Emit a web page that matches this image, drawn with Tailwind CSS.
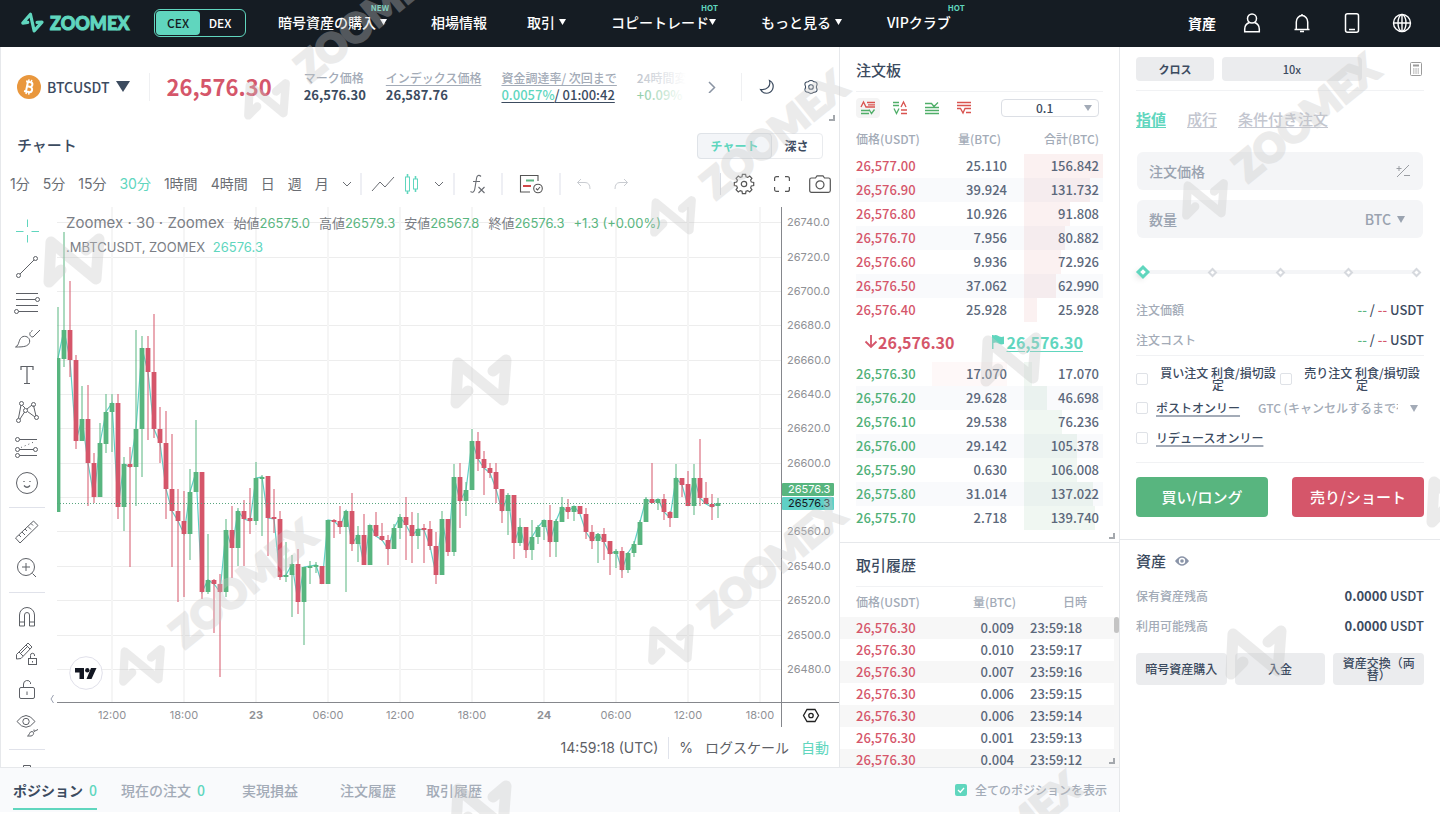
<!DOCTYPE html>
<html lang="ja">
<head>
  <meta charset="UTF-8">
  <title>BTCUSDT | ZOOMEX</title>
  <script src="https://cdn.jsdelivr.net/npm/@tailwindcss/browser@4"></script>
</head>
<body class="relative h-screen overflow-hidden flex flex-col bg-white text-[#3c4b5f] font-['Noto_Sans_CJK_JP',sans-serif] font-medium">

  <!-- shared shapes -->
  <svg class="hidden">
    <symbol id="zmark" viewBox="-36 -36 72 72">
      <path d="M-13 10L-25 22L-23 -18L22 19L25 -21L12 -10" fill="none" stroke="currentColor" stroke-width="11" stroke-linecap="round" stroke-linejoin="round"/>
    </symbol>
    <symbol id="caret" viewBox="0 0 8 8"><path d="M0 1H8L4 8Z" fill="currentColor"/></symbol>
    <symbol id="chev" viewBox="0 0 10 10"><path d="M1 3L5 7L9 3" fill="none" stroke="currentColor"/></symbol>
  </svg>

  <header class="h-[47px] shrink-0 bg-[#151c23] text-white flex items-center pl-[22px] pr-[28px] pb-0.5 text-sm">
    <a href="#" class="flex items-center text-[#60d6be]">
      <svg class="w-[21px] h-[21px] rotate-38"><use href="#zmark"/></svg>
      <span class="ml-[7px] w-[82px] font-['Lato'] font-black text-lg leading-6 [-webkit-text-stroke:1px_#60d6be]">ZOOMEX</span>
    </a>
    <div class="ml-[22px] flex items-center w-[92px] h-7 p-px border border-[#60d6be] rounded-md text-xs">
      <button class="w-11 h-6 rounded bg-[#60d6be] text-[#151c23]">CEX</button>
      <button class="w-10 h-6">DEX</button>
    </div>
    <nav class="ml-8 pb-0.5 flex items-center gap-[44px] flex-1 whitespace-nowrap">
      <a href="#" class="relative flex items-center gap-1">暗号資産の購入<svg class="w-[7px] h-[7px]"><use href="#caret"/></svg><span class="absolute -top-2.5 -right-0.5 text-[8px] leading-3 font-bold text-[#60d6be]">NEW</span></a>
      <a href="#">相場情報</a>
      <a href="#" class="-ml-1 flex items-center gap-1">取引<svg class="w-[7px] h-[7px]"><use href="#caret"/></svg></a>
      <a href="#" class="relative flex items-center ml-px">コピートレード<svg class="w-[7px] h-[7px]"><use href="#caret"/></svg><span class="absolute -top-2.5 -right-0.5 text-[8px] leading-3 font-bold text-[#60d6be]">HOT</span></a>
      <a href="#" class="ml-px flex items-center gap-1">もっと見る<svg class="w-[7px] h-[7px]"><use href="#caret"/></svg></a>
      <a href="#" class="relative ml-px">VIPクラブ<span class="absolute -top-2.5 -right-3.5 text-[8px] leading-3 font-bold text-[#60d6be]">HOT</span></a>
    </nav>
    <div class="flex items-center gap-[30px]">
      <a href="#" class="font-bold -mr-1">資産</a>
      <button aria-label="アカウント"><svg class="w-5 h-5" viewBox="0 0 20 20" fill="none" stroke="currentColor" stroke-width="1.5"><circle cx="10" cy="5.5" r="4.5"/><path d="M7.500 9.500C5 10.300 2.700 12.500 2.700 16V18.700H17.300V16C17.300 12.500 15 10.300 12.500 9.500"/></svg></button>
      <button aria-label="通知"><svg class="w-5 h-5" viewBox="0 0 20 20" fill="none" stroke="currentColor" stroke-width="1.5"><path d="M2.500 16.500H17.500M4.300 16.500V9A5.700 6.500 0 0 1 15.700 9V16.500M10 2.500V1M8 18.500H12"/></svg></button>
      <button aria-label="アプリ"><svg class="w-5 h-5" viewBox="0 0 20 20" fill="none" stroke="currentColor" stroke-width="1.5"><rect x="3.500" y=".8" width="13" height="18.400" rx="2"/><path d="M7 16.500H13"/></svg></button>
      <button aria-label="言語"><svg class="w-5 h-5" viewBox="0 0 20 20" fill="none" stroke="currentColor" stroke-width="1.4"><circle cx="10" cy="10" r="8.500"/><ellipse cx="10" cy="10" rx="4" ry="8.500"/><path d="M1.500 10H18.500M10 1.500V18.500"/></svg></button>
    </div>
  </header>

  <main class="flex-1 min-h-0 flex">
    <div class="flex-1 min-w-0 flex flex-col">
      <div class="flex-1 min-h-0 flex">

        <!-- chart column -->
        <section class="flex-1 min-w-0 flex flex-col border-x border-[#e6e8eb]">
          <div class="relative h-[79px] shrink-0 flex items-center pl-4">
            <svg class="w-6 h-6" viewBox="0 0 24 24"><circle cx="12" cy="12" r="12" fill="#e9973d"/><g transform="rotate(12 12 12)" fill="none" stroke="#fff" stroke-width="2"><path d="M8 7H12.500A2.300 2.300 0 0 1 12.500 11.700H10M12.500 11.700H13A2.600 2.600 0 0 1 13 17H8M9.900 7V17"/><path d="M10.500 4.500V7M13.200 4.500V7M10.500 17V19.500M13.200 17V19.500" stroke-width="1.5"/></g></svg>
            <span class="ml-1.5 text-sm">BTCUSDT</span>
            <svg class="ml-[7px] w-[14px] h-[11px]" viewBox="0 0 14 11"><path d="M0 0H14L7 11Z" fill="#3c4b5f"/></svg>
            <span class="ml-[19px] w-px h-7 bg-[#eff0f2]"></span>
            <span class="ml-4 text-[22px] font-bold text-[#d5566a]">26,576.30</span>
            <div class="relative ml-8 flex gap-5 flex-1 overflow-hidden whitespace-nowrap max-w-[382px]">
              <div><p class="text-xs leading-4 text-[#a3abb7]">マーク価格</p><p class="text-[13px] font-bold leading-[18px]">26,576.30</p></div>
              <div><p class="text-xs leading-4 text-[#a3abb7] underline underline-offset-2">インデックス価格</p><p class="text-[13px] font-bold leading-[18px]">26,587.76</p></div>
              <div><p class="text-xs leading-4 text-[#a3abb7] underline underline-offset-2">資金調達率/ 次回まで</p><p class="text-[13px] leading-[18px] underline underline-offset-2"><span class="text-[#60d6be]">0.0057%</span>/ 01:00:42</p></div>
              <div><p class="text-xs leading-4 text-[#a3abb7]">24時間変動</p><p class="text-[13px] leading-[18px] text-[#5ab580]">+0.09%</p></div>
              <span class="absolute right-0 inset-y-0 w-[56px] bg-linear-to-r from-white/20 to-white"></span>
            </div>
            <button class="ml-5" aria-label="次へ"><svg class="w-3 h-3" viewBox="0 0 12 12" fill="none" stroke="#8a94a3" stroke-width="1.5"><path d="M3 1L8.500 6.500L3 12"/></svg></button>
            <span class="ml-auto w-px h-7 bg-[#eff0f2]"></span>
            <button class="ml-[17px]" aria-label="テーマ"><svg class="w-4 h-4" viewBox="0 0 16 16" fill="none" stroke="#3c4b5f" stroke-width="1.200"><path d="M10.500 1.500C12 7 8 11.500 1.500 10.500C4 15.500 11 15.500 13.500 10.500C15 7 14 3 10.500 1.500Z"/></svg></button>
            <button class="ml-7 mr-5" aria-label="設定"><svg class="w-4 h-4" viewBox="0 0 16 16" fill="none" stroke="#3c4b5f" stroke-width="1.100"><path d="M5 2.800Q8 .2 11 2.800Q14.500 3 14 6Q12.800 8 14 10Q14.500 13 11 13.200Q8 15.800 5 13.200Q1.500 13 2 10Q3.200 8 2 6Q1.500 3 5 2.800Z"/><circle cx="8" cy="8" r="2.300"/></svg></button>
            <span class="absolute right-1 bottom-[5px] w-1.5 h-1.5 border-r-2 border-b-2 border-[#a4a8ad]"></span>
          </div>

          <div class="h-[39px] shrink-0 flex items-center justify-between pl-4 pr-[16px]">
            <h2 class="text-[15px]">チャート</h2>
            <div class="flex h-[26px] w-[126px] text-xs border border-[#e9ebee] rounded">
              <button class="w-[75px] -m-px border border-[#dfe3e8] rounded bg-[#f3f5f8] text-[#60d6be] font-bold">チャート</button>
              <button class="flex-1 font-bold">深さ</button>
            </div>
          </div>

          <!-- toolbar -->
          <div class="h-[42px] pb-[5px] shrink-0 flex items-center pl-[9px] pr-2 font-['Inter','Noto_Sans_CJK_JP',sans-serif] font-normal text-sm text-[#6a6d73] whitespace-nowrap">
            <div class="flex gap-[13px] items-center w-[342px]">
              <button>1分</button><button>5分</button><button>15分</button><button class="text-[#60d6be]">30分</button><button>1時間</button><button>4時間</button><button>日</button><button>週</button><button>月</button>
              <button aria-label="間隔"><svg class="w-[10px] h-[10px]"><use href="#chev"/></svg></button>
            </div>
            <span class="ml-2 w-0.5 h-[22px] bg-[#eeeff4]"></span>
            <button class="ml-[9px]" aria-label="ライン"><svg class="w-6 h-5" viewBox="0 0 24 20" fill="none" stroke="currentColor"><path d="M1 17L9 8L14 13L23 3"/></svg></button>
            <button class="ml-2" aria-label="ローソク足"><svg class="w-[18px] h-[22px]" viewBox="0 0 18 22" fill="none" stroke="#60d6be"><path d="M4.500 1V4M4.500 18V21M12.500 3V6M12.500 16V19" stroke-width="1.600"/><rect x="2.500" y="4" width="4" height="14"/><rect x="10.500" y="6" width="4" height="10"/></svg></button>
            <button class="ml-[13px]" aria-label="種類"><svg class="w-[10px] h-[10px]"><use href="#chev"/></svg></button>
            <span class="ml-[9px] w-0.5 h-[22px] bg-[#eeeff4]"></span>
            <button class="ml-[14px]" aria-label="インジケーター"><svg class="w-[18px] h-[20px]" viewBox="0 0 18 20" fill="none" stroke="currentColor" stroke-width="1.100"><path d="M12 2.500C10 .500 8 1.500 7.600 4L5.800 15C5.400 18 3.500 19 1.500 17.500M4 7.500H11M9.500 13L15.500 19M15.500 13L9.500 19"/></svg></button>
            <span class="ml-[14px] w-0.5 h-[22px] bg-[#eeeff4]"></span>
            <button class="ml-4" aria-label="テンプレート"><svg class="w-6 h-5" viewBox="0 0 24 20" fill="none" stroke="#555" stroke-width="1.100"><path d="M19 7V1.500H1.500V18H11"/><path d="M7 6.500H15" stroke="#5ab580" stroke-width="2"/><path d="M4 12H12" stroke="#cf4747" stroke-width="2"/><circle cx="19" cy="14.500" r="4.300"/><path d="M17 14.500L18.500 16L21 13"/></svg></button>
            <span class="ml-4 w-0.5 h-[22px] bg-[#eeeff4]"></span>
            <button class="ml-[15px]" aria-label="元に戻す"><svg class="w-4 h-3" viewBox="0 0 16 12" fill="none" stroke="#c9ccd1"><path d="M5 1L1.500 4.500L5 8M1.500 4.500H9Q14 4.500 14 11"/></svg></button>
            <button class="ml-[21px]" aria-label="やり直し"><svg class="w-4 h-3" viewBox="0 0 16 12" fill="none" stroke="#c9ccd1"><path d="M11 1L14.500 4.500L11 8M14.500 4.500H7Q2 4.500 2 11"/></svg></button>
            <span class="ml-auto w-px h-[22px] bg-[#dddfe4]"></span>
            <button class="ml-3" aria-label="チャート設定"><svg class="w-[22px] h-[22px]" viewBox="0 0 22 22" fill="none" stroke="#555" stroke-width="1.200"><path id="gear" d=""/><circle cx="11" cy="11" r="2.700"/></svg></button>
            <button class="ml-[19px]" aria-label="全画面"><svg class="w-[16px] h-[16px]" viewBox="0 0 16 16" fill="none" stroke="#555" stroke-width="1.200"><path d="M.6 5V2.600Q.6 .6 2.600 .6H5M11 .6H13.400Q15.400 .6 15.400 2.600V5M15.400 11V13.400Q15.400 15.400 13.400 15.400H11M5 15.400H2.600Q.6 15.400 .6 13.400V11"/></svg></button>
            <button class="ml-[19px]" aria-label="スクリーンショット"><svg class="w-[22px] h-[18px]" viewBox="0 0 22 18" fill="none" stroke="#555" stroke-width="1.200"><path d="M2.500 3H6.500L8 .8H14L15.500 3H19.500Q21.300 3 21.300 4.800V15.500Q21.300 17.300 19.500 17.300H2.500Q.7 17.300 .7 15.500V4.800Q.7 3 2.500 3Z"/><circle cx="11" cy="9.800" r="4"/></svg></button>
          </div>

          <div class="flex-1 min-h-0 flex">
            <!-- drawing tools -->
            <div class="relative w-14 shrink-0 pt-[6px] overflow-hidden text-[#5d6066] [&>button]:flex [&>button]:h-9 [&>button]:w-full [&>button]:pr-1 [&>button]:items-center [&>button]:justify-center [&_svg]:w-7 [&_svg]:h-7 [&_svg]:fill-none [&_svg]:stroke-current">
              <button aria-label="十字線"><svg viewBox="0 0 28 28"><path stroke="#60d6be" d="M14.500 2.500V10M14.500 18V25.500M3 14.500H10.500M18.500 14.500H26"/></svg></button>
              <button aria-label="トレンドライン"><svg viewBox="0 0 28 28"><path d="M7 21L21 7"/><circle cx="5.500" cy="22.500" r="2"/><circle cx="22.500" cy="5.500" r="2"/></svg></button>
              <button aria-label="フィボナッチ"><svg viewBox="0 0 28 28"><path d="M3 4.500H25M3 10.500H22.500M3 16.500H25M5.500 22.500H25"/><circle cx="24.500" cy="10.500" r="2"/><circle cx="3.500" cy="22.500" r="2"/></svg></button>
              <button aria-label="ブラシ"><svg viewBox="0 0 28 28"><path d="M2.500 22C7 20 5 13.500 10 11.500C14 10.500 17.500 13.500 16.500 17.500C15 21.500 11 22 2.500 22ZM17.500 7C16 9 17 12 20 12L27 5M18 6.500L19.500 5.500"/></svg></button>
              <button aria-label="テキスト"><svg viewBox="0 0 28 28"><path stroke-width="1.200" d="M8 9V5.500H20V9M14 5.500V22.500M11 22.500H17"/></svg></button>
              <button aria-label="パターン"><svg viewBox="0 0 28 28"><path d="M5.500 21L8 8M9.500 8.500L12 11M14 12L19 8M20.500 8.500L23 19M14.500 14.500L22 20M7 22L11.500 15"/><circle cx="8.500" cy="6.500" r="2"/><circle cx="20.500" cy="7.500" r="2"/><circle cx="12.500" cy="13.500" r="2"/><circle cx="5.500" cy="23.500" r="2"/><circle cx="23.500" cy="20.500" r="2"/></svg></button>
              <button aria-label="予測"><svg viewBox="0 0 28 28"><path d="M6.500 6.500H24M6.500 16.500H20.500M6.500 22.500H24"/><path stroke-dasharray="1 3" d="M8 14.500L22 8.500"/><circle cx="4.500" cy="6.500" r="2"/><circle cx="4.500" cy="16.500" r="2"/><circle cx="22.500" cy="16.500" r="2"/><circle cx="4.500" cy="22.500" r="2"/></svg></button>
              <button aria-label="アイコン"><svg viewBox="0 0 28 28"><circle cx="14" cy="14" r="10.500"/><path d="M11 16.500Q14 20 17 16.500M11 12V13M17 12V13" stroke-width="1.300"/></svg></button>
              <hr class="my-[6px] ml-2 mr-3 border-[#e0e2ea]">
              <button aria-label="計測"><svg viewBox="0 0 28 28"><path d="M2.500 20L20.500 3L25 7.500L7 25ZM6 17L8 19M9 14L12 17M12 11L14 13M15 8.500L18 11.500M18 5.500L20 7.500"/></svg></button>
              <button aria-label="ズーム"><svg viewBox="0 0 28 28"><circle cx="13" cy="13" r="8.500"/><path d="M19.500 19.500L23 23M13 9V17M9 13H17"/></svg></button>
              <hr class="my-[6px] ml-2 mr-3 border-[#e0e2ea]">
              <button aria-label="マグネット"><svg viewBox="0 0 28 28"><path d="M6.500 23V12A7.500 7.500 0 0 1 21.500 12V23H16.500V12A2.500 2.500 0 0 0 11.500 12V23ZM6.500 19H11.500M16.500 19H21.500"/></svg></button>
              <button aria-label="描画モード"><svg viewBox="0 0 28 28"><path d="M3.500 20V15.500L15 4L19 8L8 19.500L3.500 20M6 13L10 17M13 6L17 10M8 14L14.500 7.500"/><rect x="15.500" y="19.500" width="8" height="6"/><path d="M17.500 19.500V16.500A2 2 0 0 1 21.500 16V17M19.500 22V23.500"/></svg></button>
              <button aria-label="ロック"><svg viewBox="0 0 28 28"><rect x="6.500" y="12.500" width="15" height="11" rx="1.500"/><path d="M10.500 12.500V9A3.700 3.700 0 0 1 17.500 7.500V9M14 16.500V20"/></svg></button>
              <button aria-label="非表示"><svg viewBox="0 0 28 28"><path d="M4 10.500Q13 -1.500 22 10.500Q13 22 4 10.500Z"/><circle cx="13" cy="10.500" r="3.200"/><path d="M14.500 25C17 24 16 20.500 19 20.500C21.500 21 21 24.500 18 25ZM21 18.500V20.500L25 18.500"/></svg></button>
              <hr class="my-[6px] ml-2 mr-3 border-[#e0e2ea]">
              <button aria-label="削除"><svg viewBox="0 0 28 28"><path d="M10.500 8V5.500H17.500V8M5 8.500H23M7 8.500V24H21V8.500"/></svg></button>
              <svg class="absolute right-0.5 bottom-[63px] !w-1.5 !h-2.5" viewBox="0 0 6 10"><path d="M4.500 1L2 5L4.500 9" stroke="#9aa0b0"/></svg>
            </div>

            <div class="flex-1 min-w-0 flex flex-col font-['Inter','Noto_Sans_CJK_JP',sans-serif] font-normal">
              <div class="relative h-[520px] shrink-0 flex">
                <svg id="plot" class="flex-1 min-w-0 h-full"></svg>
                <svg id="axis" class="w-[58px] shrink-0 h-full"></svg>
                <div class="absolute left-[9px] top-[7px] text-[#7b7e85] whitespace-nowrap">
                  <p class="flex items-center gap-[9px] text-[13px] leading-[18px] text-[#5ab580]">
                    <span class="text-[15px] leading-[18px] text-[#7b7e85]">Zoomex · 30 · Zoomex</span>
                    <span><span class="text-[#7b7e85]">始値</span>26575.0</span>
                    <span><span class="text-[#7b7e85]">高値</span>26579.3</span>
                    <span><span class="text-[#7b7e85]">安値</span>26567.8</span>
                    <span><span class="text-[#7b7e85]">終値</span>26576.3</span>
                    <span>+1.3 (+0.00%)</span>
                  </p>
                  <p class="mt-[7px] text-[13px] leading-4">.MBTCUSDT, ZOOMEX <span class="ml-1 text-[#60d6be]">26576.3</span></p>
                </div>
                <svg class="absolute left-3 top-[449px] w-[34px] h-[34px]" viewBox="0 0 34 34"><circle cx="17" cy="17" r="16.300" fill="#fff" stroke="#e0e0ea"/><path fill="#131722" d="M6 12H15V23H10.500V16.500H6ZM22 12H27.500L22.500 23H17.500Z"/><circle cx="18.300" cy="14.200" r="2.200" fill="#131722"/></svg>
              </div>
              <div class="flex-1 flex items-center justify-end pt-0.5 pr-[10px] text-sm text-[#5d6066]">
                <span>14:59:18 (UTC)</span>
                <span class="mx-[10px] w-px h-[22px] bg-[#e0e3eb]"></span>
                <button>%</button>
                <button class="ml-3">ログスケール</button>
                <button class="ml-3 text-[#60d6be]">自動</button>
              </div>
            </div>
          </div>
        </section>

        <!-- order book + trades -->
        <section class="w-[280px] shrink-0 flex flex-col border-r border-[#e6e8eb] text-[#5c687b]">
          <div class="relative h-[496px] shrink-0 pl-4 pr-4 border-b border-[#e6e8eb]">
            <h2 class="h-[45px] pt-0.5 flex items-center text-[15px] text-[#3c4b5f] border-b border-[#f1f2f4]">注文板</h2>
            <div class="h-8 flex items-center">
              <div class="flex gap-2 [&_svg]:w-4 [&_svg]:h-4 [&_svg]:fill-none [&_path]:stroke-[1.3px]">
                <button class="w-6 h-5 rounded bg-[#f4f4f4] flex items-center justify-center" aria-label="両方"><svg viewBox="0 0 16 16"><path stroke="#d9534f" d="M1 7L3.500 2L6 7H15M7 2.500H15M8 4.800H15"/><path stroke="#4fae68" d="M1 10.500H9M1 13.500H9M9 9.500L11.500 13.500L14.500 9.500"/></svg></button>
                <button class="w-6 h-5 flex items-center justify-center" aria-label="左右"><svg viewBox="0 0 16 16"><path stroke="#4fae68" d="M1 2.500H7M1 5.500H7M2 8.500L4.500 13.500L7 8.500"/><path stroke="#d9534f" d="M9 7L11.500 2L14 7M9 10H15M9 13.500H15"/></svg></button>
                <button class="w-6 h-5 flex items-center justify-center" aria-label="買い"><svg viewBox="0 0 16 16"><path stroke="#4fae68" d="M1 3.500H7.500L10 6.500L14 2.500M1 7.500H15M1 10.500H15M1 13.500H15"/></svg></button>
                <button class="w-6 h-5 flex items-center justify-center" aria-label="売り"><svg viewBox="0 0 16 16"><path stroke="#d9534f" d="M1 2.500H15M1 5.500H15M1 8.500H4.500L7 13L9 8.500H15M10 12.500H15"/></svg></button>
              </div>
              <div class="relative ml-auto mr-1">
                <select aria-label="表示単位" class="appearance-none block w-[98px] h-[18px] pl-[34px] text-xs leading-4 text-[#3c4b5f] border border-[#dcdfe5] rounded bg-white"><option>0.1</option></select>
                <svg class="absolute right-[7px] top-1.5 w-2 h-1.5 text-[#a3abb7]" viewBox="0 0 8 6"><path d="M0 0H8L4 6Z" fill="currentColor"/></svg>
              </div>
            </div>
            <table class="w-full table-fixed text-right text-[13px]">
              <colgroup><col><col class="w-[92px]"><col class="w-[79px]"></colgroup>
              <thead class="text-xs text-[#a3abb7]"><tr class="h-[30px]"><th class="p-0 font-medium text-left whitespace-nowrap">価格(USDT)</th><th class="p-0 pr-[23px] font-medium">量(BTC)</th><th class="p-0 pr-1 font-medium">合計(BTC)</th></tr></thead>
              <tbody id="asks"></tbody>
            </table>
            <div class="h-10 flex items-center text-base font-bold pl-2">
              <svg class="w-3.5 h-4" viewBox="0 0 14 16" fill="none" stroke="#d5566a" stroke-width="1.800"><path d="M7 1V13M1.500 7.500L7 13L12.500 7.500"/></svg>
              <span class="text-[#d5566a]">26,576.30</span>
              <svg class="ml-[37px] w-3.5 h-4" viewBox="0 0 14 16" fill="#60d6be"><path d="M1 1H2.500V15H1ZM2.500 1.500Q5 .5 7.500 2Q10 3.500 13 2.500V10Q10 11 7.500 9.500Q5 8 2.500 9Z"/></svg>
              <a href="#" class="ml-px text-[#60d6be] underline underline-offset-2">26,576.30</a>
            </div>
            <table class="w-full table-fixed text-right text-[13px]">
              <colgroup><col><col class="w-[92px]"><col class="w-[79px]"></colgroup>
              <tbody id="bids"></tbody>
            </table>
            <span class="absolute right-1 bottom-[3px] w-1.5 h-1.5 border-r-2 border-b-2 border-[#a4a8ad]"></span>
          </div>

          <div class="relative flex-1 min-h-0 flex flex-col">
            <h2 class="mx-4 h-11 pt-0.5 shrink-0 flex items-center text-[15px] text-[#3c4b5f] border-b border-[#f1f2f4]">取引履歴</h2>
            <div class="h-[30px] shrink-0 flex items-center pl-4 text-xs text-[#a3abb7]"><span class="w-[76px]">価格(USDT)</span><span class="w-[84px] text-right">量(BTC)</span><span class="w-[71px] text-right">日時</span></div>
            <div class="flex-1 min-h-0 overflow-hidden flex">
              <table class="flex-1 h-fit text-[13px] border-collapse"><tbody id="trades"></tbody></table>
              <div class="w-[5px] bg-[#f7f7f7]"><div class="h-4 rounded-full bg-[#c4c4c4]"></div></div>
            </div>
            <span class="absolute right-1 bottom-[3px] w-1.5 h-1.5 border-r-2 border-b-2 border-[#a4a8ad]"></span>
          </div>
        </section>
      </div>

      <!-- positions bar -->
      <div class="h-[45px] mb-0.5 shrink-0 flex items-center pl-[13px] pr-3 border-t border-r border-[#e6e8eb] bg-[#f9fafc] text-sm text-[#a3abb7]">
        <button class="h-10 pt-0.5 border-b-2 border-[#60d6be] text-[#3c4b5f] font-bold">ポジション<span class="ml-1.5 font-medium text-[#60d6be]">0</span></button>
        <button class="ml-6">現在の注文<span class="ml-1.5 text-[#60d6be]">0</span></button>
        <button class="ml-[37px]">実現損益</button>
        <button class="ml-[42px]">注文履歴</button>
        <button class="ml-[30px]">取引履歴</button>
        <label class="ml-auto flex items-center gap-2 text-xs">
          <span class="relative w-3 h-3">
            <input type="checkbox" checked class="appearance-none block w-3 h-3 rounded-xs bg-[#60d6be]">
            <svg class="absolute inset-0 w-3 h-3" viewBox="0 0 12 12" fill="none" stroke="#fff" stroke-width="1.300"><path d="M3 6L5.300 8.200L9 4"/></svg>
          </span>全てのポジションを表示</label>
      </div>
    </div>

    <!-- order form -->
    <aside class="w-[320px] shrink-0 text-xs">
      <div class="h-[493px] px-4 pt-[10px] border-b border-[#e6e8eb]">
        <div class="flex items-center gap-2 pb-[9px] border-b border-[#f1f2f4] text-[11px]">
          <button class="w-[78px] h-6 rounded bg-[#ebecee] font-bold">クロス</button>
          <button class="w-[140px] h-6 rounded bg-[#ebecee]">10x</button>
          <button class="ml-auto mr-0.5" aria-label="計算機"><svg class="w-3 h-[14px]" viewBox="0 0 12 14" fill="none" stroke="#9b9b9b"><rect x=".5" y=".5" width="11" height="13" rx="1"/><path d="M3 3.500H9" stroke-width="2"/><path d="M3 7H9M3 9H9M3 11H9" stroke-dasharray="1.500 .8"/></svg></button>
        </div>
        <div class="mt-4 h-6 flex items-center gap-[21px] text-[15px] leading-6 text-[#c3c6cf]">
          <button class="text-[#60d6be] underline underline-offset-2 font-bold">指値</button><button class="underline underline-offset-2">成行</button><button class="underline underline-offset-2">条件付き注文</button>
        </div>
        <div class="relative mt-[21px] mx-px">
          <input type="text" aria-label="注文価格" placeholder="注文価格" class="block w-full h-[38px] px-3 rounded-md bg-[#f4f5f7] text-sm placeholder:text-[#9aa3b0]">
          <svg class="absolute right-3 top-3 w-4 h-4" viewBox="0 0 16 16" fill="none" stroke="#9a9da3"><path d="M2 13L14 1M1.500 4.500H6.500M4 2V7M9 11.500H15"/></svg>
        </div>
        <div class="mt-2.5 mx-px flex h-[38px] rounded-md bg-[#f4f5f7] text-sm text-[#9aa3b0]">
          <input type="text" aria-label="数量" placeholder="数量" class="flex-1 min-w-0 px-3 placeholder:text-[#9aa3b0]">
          <button class="flex items-center gap-1.5 pr-[18px]">BTC<svg class="w-2 h-2"><use href="#caret"/></svg></button>
        </div>
        <div class="relative mt-[27px] h-3.5 flex items-center justify-between">
          <div class="absolute inset-x-2 h-1 bg-[#f4f5f7]"></div>
          <i class="relative w-2.5 h-2.5 ml-0.5 rotate-45 bg-white border-3 border-[#60d6be] shadow-md"></i>
          <i class="relative w-[7px] h-[7px] rotate-45 bg-white border-2 border-[#d6d9de]"></i>
          <i class="relative w-[7px] h-[7px] rotate-45 bg-white border-2 border-[#d6d9de]"></i>
          <i class="relative w-[7px] h-[7px] rotate-45 bg-white border-2 border-[#d6d9de]"></i>
          <i class="relative w-[7px] h-[7px] mr-1 rotate-45 bg-white border-2 border-[#d6d9de]"></i>
          <input type="range" aria-label="数量の割合" value="0" class="absolute inset-0 w-full opacity-0">
        </div>
        <div class="mt-4 h-[30px] flex items-center justify-between"><span class="text-[#a3abb7]">注文価額</span><span class="text-[13px]"><span class="text-[#5ab580]">--</span> / <span class="text-[#d5566a]">--</span> USDT</span></div>
        <div class="h-[31px] flex items-center justify-between border-b border-[#f1f2f4]"><span class="text-[#a3abb7]">注文コスト</span><span class="text-[13px]"><span class="text-[#5ab580]">--</span> / <span class="text-[#d5566a]">--</span> USDT</span></div>
        <div class="mt-[11px] h-6 flex items-center leading-3 text-center">
          <input id="tp-buy" type="checkbox" class="appearance-none w-3 h-3 shrink-0 rounded-xs border border-[#dfe2e7]"><label for="tp-buy" class="w-[132px] pl-2">買い注文 利食/損切設定</label>
          <input id="tp-sell" type="checkbox" class="appearance-none w-3 h-3 shrink-0 rounded-xs border border-[#dfe2e7]"><label for="tp-sell" class="w-[132px] pl-2">売り注文 利食/損切設定</label>
        </div>
        <div class="mt-0.5 h-[30px] flex items-center">
          <input id="post" type="checkbox" class="appearance-none w-3 h-3 shrink-0 rounded-xs border border-[#dfe2e7]"><label for="post" class="ml-2 underline underline-offset-2 decoration-2 decoration-[#a3abb7]">ポストオンリー</label>
          <select aria-label="有効期間" class="appearance-none ml-[18px] w-[140px] text-[#a3abb7]"><option>GTC (キャンセルするまで有効)</option></select>
          <svg class="ml-3 w-2 h-2 text-[#a3abb7]"><use href="#caret"/></svg>
        </div>
        <div class="h-[30px] flex items-center">
          <input id="reduce" type="checkbox" class="appearance-none w-3 h-3 shrink-0 rounded-xs border border-[#dfe2e7]"><label for="reduce" class="ml-2 underline underline-offset-2 decoration-2 decoration-[#a3abb7]">リデュースオンリー</label>
        </div>
        <div class="mt-[9px] pt-[14px] border-t border-[#f1f2f4] flex gap-6 text-[15px] text-white">
          <button class="flex-1 h-10 rounded bg-[#58b57f]">買い/ロング</button>
          <button class="flex-1 h-10 rounded bg-[#d5566a]">売り/ショート</button>
        </div>
      </div>

      <div class="px-4 pt-2">
        <h2 class="h-[26px] flex items-center gap-2 text-[15px]">資産<svg class="w-4 h-4" viewBox="0 0 16 16"><path d="M1 8Q8 -1.500 15 8Q8 17.500 1 8Z" fill="#8a94a8"/><circle cx="8" cy="8" r="3.200" fill="#fff"/><circle cx="8" cy="8" r="1.800" fill="#8a94a8"/></svg></h2>
        <div class="mt-[7px] h-[30px] flex items-center justify-between"><span class="text-[#a3abb7]">保有資産残高</span><span class="text-[13px]"><b>0.0000</b> USDT</span></div>
        <div class="h-[30px] flex items-center justify-between"><span class="text-[#a3abb7]">利用可能残高</span><span class="text-[13px]"><b>0.0000</b> USDT</span></div>
        <div class="mt-3 grid grid-cols-3 gap-2 leading-3">
          <button class="h-8 rounded bg-[#ebecee]">暗号資産購入</button>
          <button class="h-8 rounded bg-[#ebecee]">入金</button>
          <button class="h-8 px-2 rounded bg-[#ebecee]">資産交換（両替）</button>
        </div>
      </div>
    </aside>
  </main>

  <!-- tiled watermark -->
  <svg id="watermark" class="absolute inset-0 w-full h-full pointer-events-none text-[#c8c8c8] opacity-35 font-['Lato'] font-black text-[39px]" fill="currentColor"></svg>

  <script>
    // order book: price, size, total, depth bar width
    const asks = [
      ['26,577.00', '25.110', '156.842', 79], ['26,576.90', '39.924', '131.732', 66], ['26,576.80', '10.926', '91.808', 46],
      ['26,576.70', '7.956', '80.882', 41], ['26,576.60', '9.936', '72.926', 37], ['26,576.50', '37.062', '62.990', 32], ['26,576.40', '25.928', '25.928', 13]
    ];
    const bids = [
      ['26,576.30', '17.070', '17.070', 8], ['26,576.20', '29.628', '46.698', 23], ['26,576.10', '29.538', '76.236', 38],
      ['26,576.00', '29.142', '105.378', 53], ['26,575.90', '0.630', '106.008', 53], ['26,575.80', '31.014', '137.022', 69], ['26,575.70', '2.718', '139.740', 71]
    ];
    const trades = [['0.009', '18'], ['0.010', '17'], ['0.007', '16'], ['0.006', '15'], ['0.006', '14'], ['0.001', '13'], ['0.004', '12']];

    function bookRow(r, priceCls, barCls, sizeCls) {
      return `<tr class="h-6 leading-6 even:bg-[#f9fafc]">
        <td class="p-0 text-left ${priceCls}">${r[0]}</td>
        <td class="p-0 pr-[17px]"><div class="${sizeCls}">${r[1]}</div></td>
        <td class="relative p-0 pr-1"><span class="absolute left-0 inset-y-0 ${barCls}" style="width:${r[3]}px"></span><span class="relative">${r[2]}</span></td></tr>`;
    }
    document.getElementById('asks').innerHTML = asks.map(r => bookRow(r, 'text-[#d5566a]', 'bg-[#d04a48]/8', '')).join('');
    document.getElementById('bids').innerHTML = bids.map((r, i) => bookRow(r, 'text-[#4fb077]', 'bg-[#5aa56e]/9', i === 0 ? 'bg-[#fef8f8]' : '')).join('');
    document.getElementById('trades').innerHTML = trades.map(t => `<tr class="h-[22px] leading-[22px] odd:bg-[#f7f7f7]">
      <td class="p-0 pl-4 w-[92px] text-[#d5566a]">26,576.30</td><td class="p-0 w-[82px] text-right">${t[0]}</td><td class="p-0 pl-4">23:59:${t[1]}</td></tr>`).join('');

    // candles: [up, high, bodyTop, bodyBottom, low] in screen units
    const candles = [
      [1,307,358,512,512],[1,232,330,359,367],[0,281,330,360,377],[0,355,360,441,449],[1,386,419,441,441],[0,385,419,463,506],
      [0,453,463,497,503],[1,423,443,497,497],[1,394,412,444,453],[1,394,403,412,452],[0,394,403,507,519],[1,457,464,507,531],
      [0,447,464,467,567],[1,330,429,467,506],[1,336,348,429,477],[0,336,348,372,440],[0,314,372,429,438],[0,407,429,443,463],
      [0,411,443,489,519],[0,434,489,511,567],[0,489,511,521,602],[0,491,521,534,597],[1,469,492,534,560],[1,420,472,492,492],
      [0,472,472,592,599],[1,534,580,592,594],[0,579,580,584,633],[0,574,584,592,677],[1,519,530,592,597],[0,506,530,548,578],
      [1,508,511,548,566],[0,500,511,519,566],[0,488,518,521,534],[1,462,478,521,525],[1,475,477,479,536],[0,476,476,518,556],
      [0,489,517,519,533],[0,511,519,577,580],[1,542,575,577,582],[1,555,564,575,617],[0,549,564,602,614],[1,567,567,602,645],
      [1,561,566,567,584],[1,562,565,567,573],[0,566,566,584,584],[1,520,520,584,584],[0,519,520,521,538],[0,506,521,527,534],
      [1,510,511,527,592],[0,493,511,544,551],[1,526,535,544,562],[0,514,535,565,565],[1,525,525,565,565],[0,512,525,536,537],
      [0,523,536,540,541],[0,535,540,549,565],[1,524,528,549,549],[1,514,517,528,539],[0,497,517,525,560],[0,512,525,536,563],
      [1,513,529,536,549],[0,524,528,530,563],[0,521,529,546,550],[0,532,546,575,584],[1,511,519,575,575],[0,519,519,552,556],
      [1,464,477,552,556],[0,463,477,501,528],[1,482,490,501,516],[1,429,441,490,490],[0,432,441,459,471],[0,451,459,468,495],
      [0,463,468,473,478],[0,463,472,489,503],[0,489,489,511,523],[1,493,495,511,535],[0,495,495,543,559],[1,518,527,543,546],
      [0,527,527,550,558],[1,520,537,550,560],[1,525,527,537,544],[1,520,520,527,540],[0,505,520,542,557],[1,519,521,542,557],
      [1,497,507,522,522],[0,499,507,512,519],[1,506,506,512,521],[0,506,506,514,514],[0,508,514,532,539],[0,525,532,541,549],
      [1,533,534,541,563],[0,528,534,542,560],[0,541,541,554,575],[1,549,551,554,568],[0,547,551,570,578],[1,552,553,570,573],
      [1,541,544,553,557],[1,520,522,545,545],[1,497,499,522,522],[0,463,499,503,503],[1,499,499,503,510],[0,494,499,512,520],
      [0,511,512,518,527],[1,464,478,518,518],[0,478,478,485,497],[0,471,484,506,506],[1,464,478,506,515],[0,439,478,498,506],
      [0,482,498,504,504],[0,494,504,507,520],[1,498,503,506,518]
    ];
    const top0 = 207, stepX = 6;
    const priceY = i => Math.round(222.3 + i * 34.35) - top0;
    let s = '';
    for (let i = 0; i < 14; i++) s += `<rect x="0" y="${priceY(i)}" width="100%" height="1" fill="#ededed"/>`;
    for (let i = 0; i < 10; i++) s += `<rect x="${54 + i * 72}" y="0" width="2" height="495" fill="#f5f5f5"/>`;
    s += `<polyline fill="none" stroke="#5fd0c6" stroke-width="1.2" points="${candles.map((c, i) => (1 + i * stepX) + ',' + ((c[0] ? c[2] : c[3]) - top0)).join(' ')}"/>`;
    candles.forEach((c, i) => {
      const x = 1 + i * stepX, col = c[0] ? '#58b57f' : '#d5566a', h = Math.max(c[3] - c[2], 2);
      s += `<g fill="${col}"><rect x="${x - 1}" y="${c[1] - top0}" width="2" height="${c[4] - c[1]}" opacity=".5"/>` +
        `<rect x="${x - 3}" y="${c[2] - top0}" width="6" height="${h}" opacity=".4"/><rect x="${x - 2}" y="${c[2] - top0}" width="4" height="${h}"/></g>`;
    });
    s += `<line x1="0" x2="100%" y1="296.5" y2="296.5" stroke="#58a57f" stroke-dasharray="1 2"/><rect x="0" y="495" width="100%" height="1" fill="#85878c"/>`;
    ['12:00', '18:00', '23', '06:00', '12:00', '18:00', '24', '06:00', '12:00', '18:00'].forEach((t, i) => {
      s += `<text x="${55 + i * 72}" y="512" text-anchor="middle" font-size="11" font-weight="${t.length === 2 ? 700 : 400}" fill="#8f9196">${t}</text>`;
    });
    document.getElementById('plot').innerHTML = s;

    s = '<rect x="0" y="0" width="1" height="520" fill="#85878c"/><rect x="0" y="495" width="58" height="1" fill="#85878c"/>';
    for (let i = 0; i < 14; i++) if (i !== 8) s += `<text x="6" y="${priceY(i) + 4}" font-size="11" fill="#8f9196">${26740 - i * 20}.0</text>`;
    s += `<rect x="1" y="276" width="52" height="13" rx="1" fill="#58b57f"/><text x="7" y="286" font-size="11" fill="#fff">26576.3</text>
      <rect x="1" y="290" width="52" height="13" rx="1" fill="#5fd0c6"/><text x="7" y="300" font-size="11" fill="#131722">26576.3</text>
      <g fill="none" stroke="#222" stroke-width="1.3"><path d="M26 502.500H34L37.500 508.500L34 514.500H26L22.500 508.500Z"/><circle cx="30" cy="508.500" r="2.200"/></g>`;
    document.getElementById('axis').innerHTML = s;

    // eight-tooth gear outline
    let d = '';
    for (let i = 0; i < 8; i++) {
      [[-0.26, 7.6], [-0.16, 9.8], [0.16, 9.8], [0.26, 7.6]].forEach(([a, r], k) => {
        const t = i * Math.PI / 4 + a;
        d += (i + k ? 'L' : 'M') + (11 + r * Math.cos(t)).toFixed(1) + ' ' + (11 + r * Math.sin(t)).toFixed(1);
      });
    }
    document.getElementById('gear').setAttribute('d', d + 'Z');

    // watermark tiles: big marks, then mark + wordmark
    s = '';
    [[74, 260], [481, 381], [1011, 359], [1256, 652], [481, 807], [1457, 500]].forEach(([x, y]) => {
      s += `<use href="#zmark" x="${x - 36}" y="${y - 36}" width="72" height="72"/>`;
    });
    [[267, 99], [142, 665], [673, 216], [671, 644], [1205, 199], [906, 917]].forEach(([x, y]) => {
      s += `<use href="#zmark" x="${x - 27}" y="${y - 27}" width="54" height="54"/><text transform="translate(${x + 43} ${y - 16}) rotate(-39)" stroke="currentColor" stroke-width="3">ZOOMEX</text>`;
    });
    document.getElementById('watermark').innerHTML = s;
  </script>
</body>
</html>
